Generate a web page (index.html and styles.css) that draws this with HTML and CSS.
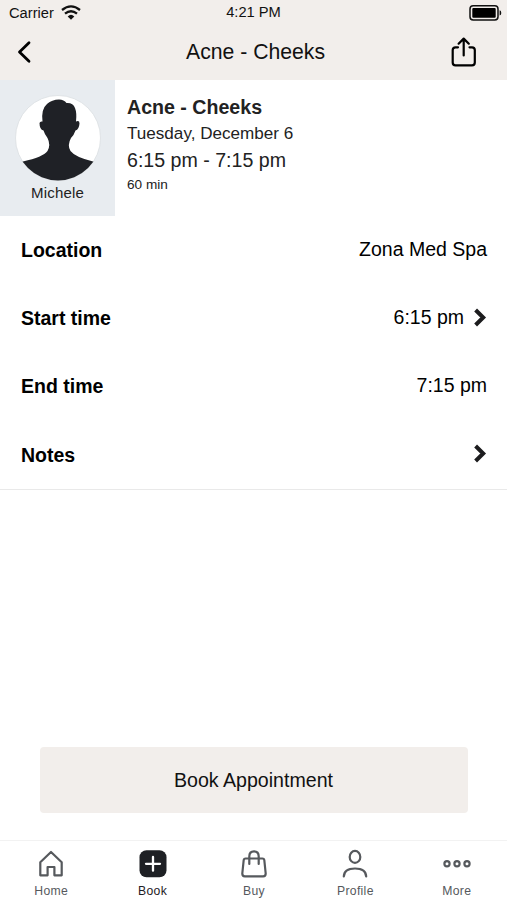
FILE: index.html
```html
<!DOCTYPE html>
<html lang="en">
<head>
  <meta charset="UTF-8">
  <meta name="viewport" content="width=device-width, initial-scale=1.0">
  <title>Acne - Cheeks</title>
  <link rel="stylesheet" href="styles.css">
</head>
<body>
  <div id="app">
    <header>
      <div class="status">
        <div class="carrier">
          <span>Carrier</span>
          <svg width="20" height="15" viewBox="0 0 20 15">
            <path d="M1 5Q10 -2.2 19 5M4 8.7Q10 3.7 16 8.7" fill="none" stroke="#111" stroke-width="2.3"/>
            <path d="M6.7 11.4Q10 8.2 13.3 11.4L10 14.8Z" fill="#111"/>
          </svg>
        </div>
        <span class="clock">4:21 PM</span>
        <svg class="battery" width="33" height="16" viewBox="0 0 33 16">
          <rect x="1" y=".8" width="28" height="14.2" rx="3.2" fill="none" stroke="#111" stroke-width="1.5"/>
          <rect x="3.3" y="3" width="23.4" height="9.8" rx="1" fill="#000"/>
          <path d="M30.6 5.2Q32.3 5.6 32.3 7.9T30.6 10.6Z" fill="#111"/>
        </svg>
      </div>
      <div class="nav">
        <a href="#" class="back">
          <svg width="14" height="24" viewBox="0 0 14 24">
            <path d="M12 2.8L2.5 12L12 21.2" fill="none" stroke="#000" stroke-width="2.8" stroke-linecap="round" stroke-linejoin="round"/>
          </svg>
        </a>
        <h1>Acne - Cheeks</h1>
        <a href="#" class="share">
          <svg width="26" height="31" viewBox="0 0 26 31">
            <g fill="none" stroke="#000" stroke-width="2.2" stroke-linecap="round" stroke-linejoin="round">
              <path d="M7 10.3H4.5Q1.7 10.3 1.7 13.1V25.5Q1.7 28.3 4.5 28.3H21Q23.8 28.3 23.8 25.5V13.1Q23.8 10.3 21 10.3H18.500"/>
              <path d="M12.700 18.500V2M7.600 6.700L12.700 1.600L17.800 6.700"/>
            </g>
          </svg>
        </a>
      </div>
    </header>

    <section class="summary">
      <div class="staff">
        <svg width="86" height="86" viewBox="0 0 86 86">
          <defs><clipPath id="round"><circle cx="43" cy="43" r="42.5"/></clipPath></defs>
          <circle cx="43" cy="43" r="42.5" fill="#fff" stroke="#d9dcdf" stroke-width=".7"/>
          <path clip-path="url(#round)" fill="#1f2126" d="M0 69L8 66.500Q28 62 32.500 56Q36 50 32.500 43Q29.500 39 28.500 35.500Q24.500 34.500 24.500 28Q25 26 27.500 26.500Q26 14 32 9Q37 4.500 44 4.500Q49 4.500 51.500 8Q58 7.500 60 13Q62 18 61 26.500Q64.500 25 64.500 28.500Q64 34.500 60.500 35.500Q59 40 56 43Q52 50 55.500 56Q60 62 78 66.500L86 69V86H0Z"/>
        </svg>
        <span>Michele</span>
      </div>
      <div class="info">
        <h2>Acne - Cheeks</h2>
        <p class="date">Tuesday, December 6</p>
        <p class="time">6:15 pm - 7:15 pm</p>
        <p class="length">60 min</p>
      </div>
    </section>

    <ul class="details">
      <li><b>Location</b><span>Zona Med Spa</span></li>
      <li>
        <b>Start time</b>
        <span>6:15 pm</span>
        <svg width="14" height="20" viewBox="0 0 14 20"><path d="M2.600 2L10.200 9.500L2.600 17" fill="none" stroke="#1c1c1e" stroke-width="4"/></svg>
      </li>
      <li><b>End time</b><span>7:15 pm</span></li>
      <li>
        <b>Notes</b>
        <svg width="14" height="20" viewBox="0 0 14 20"><path d="M2.600 2L10.200 9.500L2.600 17" fill="none" stroke="#1c1c1e" stroke-width="4"/></svg>
      </li>
    </ul>

    <button class="book">Book Appointment</button>

    <nav class="tabs">
      <a href="#">
        <svg width="30" height="30" viewBox="0 0 30 30">
          <path d="M4.300 13.200L15 3L25.700 13.200V26.300H18.400V18H11.600V26.300H4.300Z" fill="none" stroke="#56595d" stroke-width="2.200" stroke-linejoin="round"/>
        </svg>
        <span>Home</span>
      </a>
      <a href="#" class="on">
        <svg width="30" height="30" viewBox="0 0 30 30">
          <rect x="1.500" y="1.300" width="27" height="27" rx="7" fill="#1e2024"/>
          <path d="M15 7.900V21.700M8 14.800H22" stroke="#fff" stroke-width="2.300" stroke-linecap="round"/>
        </svg>
        <span>Book</span>
      </a>
      <a href="#">
        <svg width="30" height="30" viewBox="0 0 30 30">
          <g fill="none" stroke="#56595d" stroke-width="2.200" stroke-linecap="round" stroke-linejoin="round">
            <path d="M6.500 9.500H23.500Q25 9.500 25.300 11L26.700 24.500Q26.700 27.300 24.200 27.300H5.800Q3.300 27.300 3.300 24.500L4.700 11Q5 9.500 6.500 9.500Z"/>
            <path d="M10.300 15V7.500Q10.300 2.300 15 2.300T19.700 7.500V15"/>
          </g>
        </svg>
        <span>Buy</span>
      </a>
      <a href="#">
        <svg width="30" height="30" viewBox="0 0 30 30">
          <g fill="none" stroke="#56595d" stroke-width="2.200" stroke-linecap="round">
            <ellipse cx="15" cy="7.900" rx="5.300" ry="6"/>
            <path d="M3.800 27.500C4 22 8 19.500 15 19.500S26 22 26.200 27.500"/>
          </g>
        </svg>
        <span>Profile</span>
      </a>
      <a href="#">
        <svg width="30" height="30" viewBox="0 0 30 30">
          <g fill="none" stroke="#56595d" stroke-width="2.200">
            <circle cx="5" cy="14.800" r="2.600"/>
            <circle cx="15" cy="14.800" r="2.600"/>
            <circle cx="25" cy="14.800" r="2.600"/>
          </g>
        </svg>
        <span>More</span>
      </a>
    </nav>
  </div>
</body>
</html>
```
FILE: styles.css
```css
* {margin: 0; padding: 0; box-sizing: border-box;}
body {
  font-family: "Liberation Sans", Arial, sans-serif;
  background: #fff;
  color: #111;
}
a {
  color: inherit;
  text-decoration: none;
}
svg {
  display: block;
  flex: none;
}
#app {
  height: 900px;
  display: flex;
  flex-direction: column;
}
header {
  height: 80px;
  background: #f2eeeb;
}
.status {
  height: 25px;
  padding: 0 5px 0 9px;
  display: grid;
  grid-template-columns: 1fr auto 1fr;
  align-items: center;
  font-size: 14.7px;
}
.carrier {
  display: flex;
  align-items: center;
  gap: 7px;
}
.clock {
  padding-right: 4px;
  padding-bottom: 1px;
}
.battery {
  justify-self: end;
}
.nav {
  height: 54px;
  padding: 0 30px 0 17px;
  display: grid;
  grid-template-columns: 1fr auto 1fr;
  align-items: center;
}
.nav h1 {
  font-size: 21.2px;
  font-weight: 400;
  padding-left: 17px;
}
.share {
  justify-self: end;
}
.summary {
  height: 136px;
  display: flex;
}
.staff {
  width: 115px;
  background: #e8ecf0;
  display: flex;
  flex-direction: column;
  align-items: center;
  padding-top: 15px;
  font-size: 15px;
  letter-spacing: 0.2px;
  color: #222;
}
.staff span {
  line-height: 18px;
  padding-top: 3px;
}
.info {
  padding: 14px 12px;
  color: #222;
}
.info h2 {
  font-size: 19.6px;
  line-height: 26px;
}
.date {
  font-size: 17.1px;
  line-height: 27px;
}
.time {
  font-size: 19.6px;
  line-height: 26px;
}
.length {
  font-size: 13.6px;
  line-height: 23px;
}
.details {
  height: 274px;
  list-style: none;
  border-bottom: 1px solid #e9e9e9;
  font-size: 19.5px;
  color: #000;
}
.details li {
  height: 68.4px;
  padding: 0 20px 0 21px;
  display: flex;
  align-items: center;
}
.details b {
  flex: 1;
}
.details span {
  padding-bottom: 2px;
}
.details svg {
  margin-left: 9px;
  margin-bottom: 2px;
}
.book {
  width: 428px;
  height: 66px;
  margin: auto auto 27px;
  border: none;
  border-radius: 4px;
  background: #f2eeeb;
  font: 19.6px "Liberation Sans", Arial, sans-serif;
  color: #111;
}
.tabs {
  height: 60px;
  border-top: 1px solid #f2f2f2;
  display: grid;
  grid-template-columns: repeat(5, 1fr);
}
.tabs a {
  display: flex;
  flex-direction: column;
  align-items: center;
  padding: 8px 0 0 1px;
  font-size: 12.2px;
  letter-spacing: 0.3px;
  color: #56595d;
}
.tabs span {
  line-height: 16px;
  padding-top: 4px;
}
.tabs .on {
  color: #1e2024;
}
```
